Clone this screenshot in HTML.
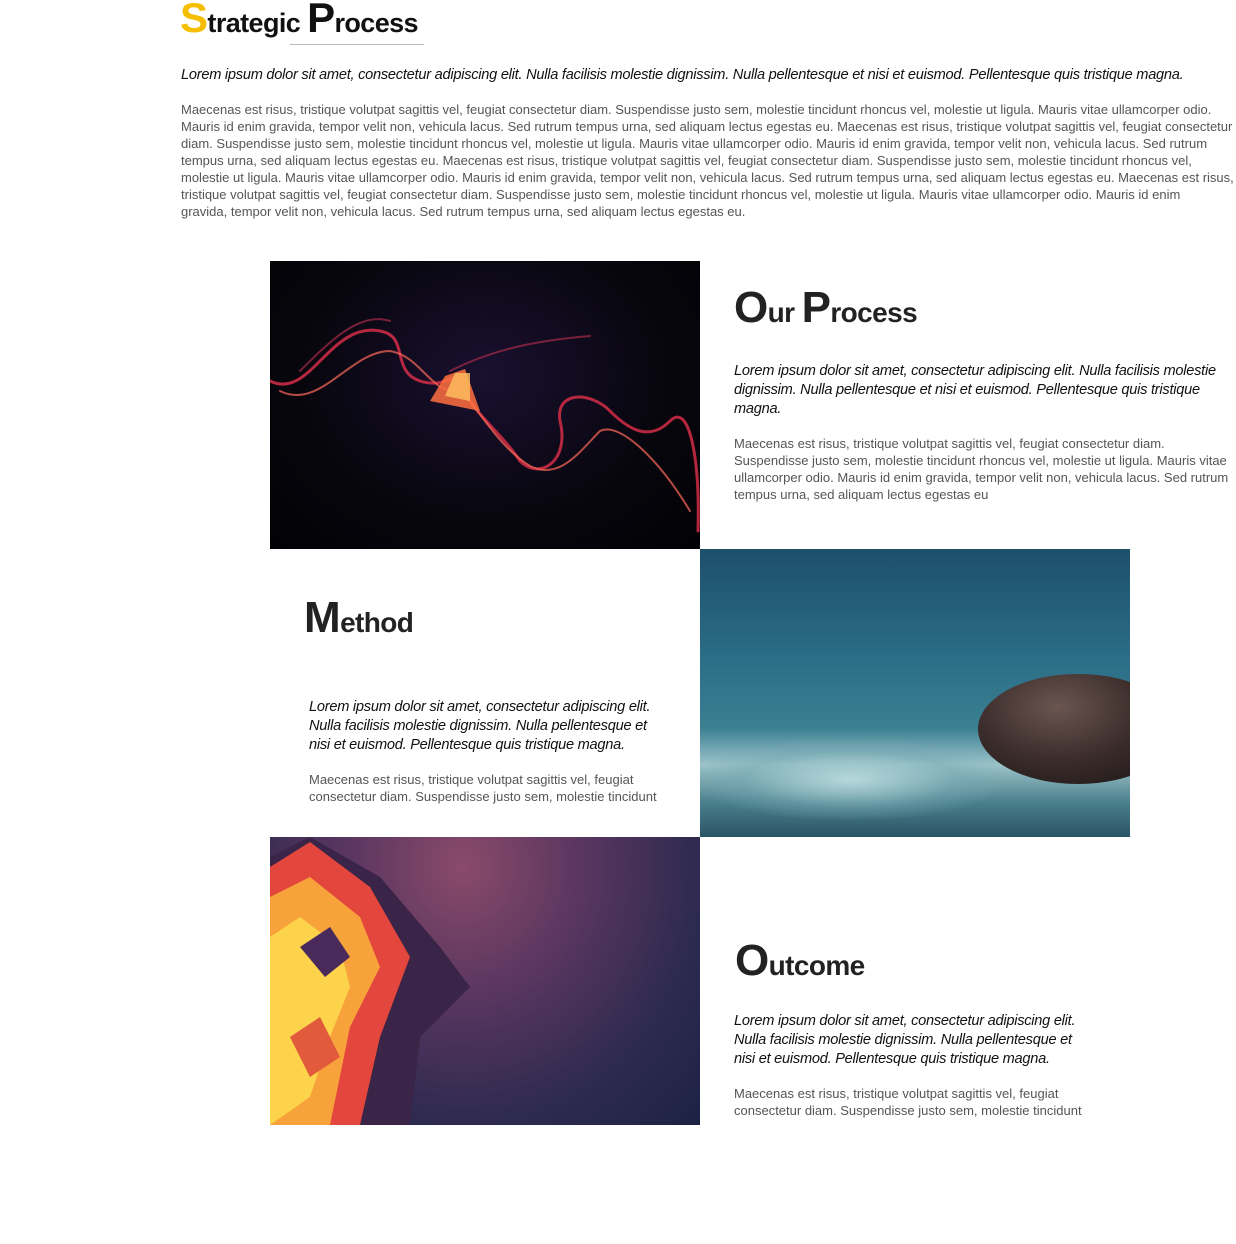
<!DOCTYPE html>
<html><head><meta charset="utf-8"><style>
*{margin:0;padding:0}
body{width:1236px;height:1244px;background:#fff;position:relative;overflow:hidden;font-family:"Liberation Sans",sans-serif}
.a{position:absolute;white-space:nowrap}
.h{color:#222;font-weight:bold;letter-spacing:-0.6px}
.it{font-style:italic;color:#111;font-size:14.6px;line-height:19px;letter-spacing:-0.25px}
.b{color:#555;font-size:13px;line-height:17px;letter-spacing:0px}
.img{position:absolute;width:430px;height:288px;overflow:hidden}
</style></head><body>
<div class="a h" style="left:180px;top:-6px;font-size:27px;color:#111"><span style="font-size:42px;color:#f5bf00">S</span>trategic <span style="font-size:42px">P</span>rocess</div>
<div class="a" style="left:290px;top:44px;width:134px;height:1px;background:#bbb"></div>
<div class="a it" style="left:181px;top:66px;">Lorem ipsum dolor sit amet, consectetur adipiscing elit. Nulla facilisis molestie dignissim. Nulla pellentesque et nisi et euismod. Pellentesque quis tristique magna.</div>
<div class="a b" style="left:181px;top:101px;">Maecenas est risus, tristique volutpat sagittis vel, feugiat consectetur diam. Suspendisse justo sem, molestie tincidunt rhoncus vel, molestie ut ligula. Mauris vitae ullamcorper odio.<br>Mauris id enim gravida, tempor velit non, vehicula lacus. Sed rutrum tempus urna, sed aliquam lectus egestas eu. Maecenas est risus, tristique volutpat sagittis vel, feugiat consectetur<br>diam. Suspendisse justo sem, molestie tincidunt rhoncus vel, molestie ut ligula. Mauris vitae ullamcorper odio. Mauris id enim gravida, tempor velit non, vehicula lacus. Sed rutrum<br>tempus urna, sed aliquam lectus egestas eu. Maecenas est risus, tristique volutpat sagittis vel, feugiat consectetur diam. Suspendisse justo sem, molestie tincidunt rhoncus vel,<br>molestie ut ligula. Mauris vitae ullamcorper odio. Mauris id enim gravida, tempor velit non, vehicula lacus. Sed rutrum tempus urna, sed aliquam lectus egestas eu. Maecenas est risus,<br>tristique volutpat sagittis vel, feugiat consectetur diam. Suspendisse justo sem, molestie tincidunt rhoncus vel, molestie ut ligula. Mauris vitae ullamcorper odio. Mauris id enim<br>gravida, tempor velit non, vehicula lacus. Sed rutrum tempus urna, sed aliquam lectus egestas eu.</div>

<div class="img" style="left:270px;top:261px;background:radial-gradient(ellipse at 50% 40%,#1a1030 0%,#07060d 60%,#020205 100%)">
<svg width="430" height="288" viewBox="0 0 430 288"><g fill="none" stroke-linecap="round">
<path d="M0 120 C40 140 60 60 110 70 C140 75 120 110 150 120 C175 128 185 110 190 120 C200 150 230 170 250 200 C270 220 300 200 290 160 C285 130 320 130 340 150 C360 170 380 180 400 160 C420 140 430 200 428 270" stroke="#e0304a" stroke-width="3" opacity=".8"/>
<path d="M10 130 C50 150 80 90 120 90 C150 95 160 130 185 130 C205 135 220 180 260 205 C290 220 310 190 330 170 C350 160 390 200 420 250" stroke="#ff6a5a" stroke-width="2" opacity=".7"/>
<path d="M30 110 C60 80 90 50 120 60 M180 110 C220 90 260 80 320 75" stroke="#c03050" stroke-width="2" opacity=".6"/>
<polygon points="175,115 195,108 210,150 160,140" fill="#ff7040" opacity=".85"/>
<polygon points="185,112 200,112 200,140 175,135" fill="#ffc060" opacity=".8"/>
</g></svg></div>
<div class="a h" style="left:734px;top:283px;font-size:28px"><span style="font-size:44px">O</span>ur <span style="font-size:44px">P</span>rocess</div>
<div class="a it" style="left:734px;top:362px;">Lorem ipsum dolor sit amet, consectetur adipiscing elit. Nulla facilisis molestie<br>dignissim. Nulla pellentesque et nisi et euismod. Pellentesque quis tristique<br>magna.</div>
<div class="a b" style="left:734px;top:435px;">Maecenas est risus, tristique volutpat sagittis vel, feugiat consectetur diam.<br>Suspendisse justo sem, molestie tincidunt rhoncus vel, molestie ut ligula. Mauris vitae<br>ullamcorper odio. Mauris id enim gravida, tempor velit non, vehicula lacus. Sed rutrum<br>tempus urna, sed aliquam lectus egestas eu</div>

<div class="img" style="left:700px;top:549px;background:linear-gradient(180deg,#1d4f6a 0%,#2c6f88 40%,#3b7f92 62%,#9cc3c9 75%,#4a7f8c 88%,#2a5465 100%)">
<div style="position:absolute;left:0;top:190px;width:300px;height:80px;background:radial-gradient(ellipse,#b6d8db 0%,rgba(120,170,180,.5) 50%,rgba(0,0,0,0) 75%)"></div>
<div style="position:absolute;left:278px;top:125px;width:200px;height:110px;border-radius:50%;background:radial-gradient(ellipse at 40% 30%,#6a5550,#3a2c2a 50%,#1e1818 90%)"></div>
</div>
<div class="a h" style="left:304px;top:593px;font-size:28px"><span style="font-size:44px">M</span>ethod</div>
<div class="a it" style="left:309px;top:698px;">Lorem ipsum dolor sit amet, consectetur adipiscing elit.<br>Nulla facilisis molestie dignissim. Nulla pellentesque et<br>nisi et euismod. Pellentesque quis tristique magna.</div>
<div class="a b" style="left:309px;top:771px;">Maecenas est risus, tristique volutpat sagittis vel, feugiat<br>consectetur diam. Suspendisse justo sem, molestie tincidunt</div>

<div class="img" style="left:270px;top:837px;background:radial-gradient(ellipse at 45% 10%,#8a4a6a 0%,#5a3660 35%,#2e2a50 70%,#1c2244 100%)">
<svg width="430" height="288" viewBox="0 0 430 288">
<polygon points="0,20 40,0 110,40 170,110 200,150 150,200 140,288 0,288" fill="#3a2448"/>
<polygon points="0,30 40,5 100,50 140,120 110,200 90,288 0,288" fill="#e2463c"/>
<polygon points="0,60 40,40 90,80 110,130 80,190 60,288 0,288" fill="#f7a23a"/>
<polygon points="0,100 30,80 70,110 80,150 60,200 40,260 0,288" fill="#fcd34a"/>
<polygon points="30,110 60,90 80,120 55,140" fill="#4a2a5a"/>
<polygon points="20,200 50,180 70,220 40,240" fill="#e25a3c"/>
</svg></div>
<div class="a h" style="left:735px;top:936px;font-size:28px"><span style="font-size:44px">O</span>utcome</div>
<div class="a it" style="left:734px;top:1012px;">Lorem ipsum dolor sit amet, consectetur adipiscing elit.<br>Nulla facilisis molestie dignissim. Nulla pellentesque et<br>nisi et euismod. Pellentesque quis tristique magna.</div>
<div class="a b" style="left:734px;top:1085px;">Maecenas est risus, tristique volutpat sagittis vel, feugiat<br>consectetur diam. Suspendisse justo sem, molestie tincidunt</div>
</body></html>
